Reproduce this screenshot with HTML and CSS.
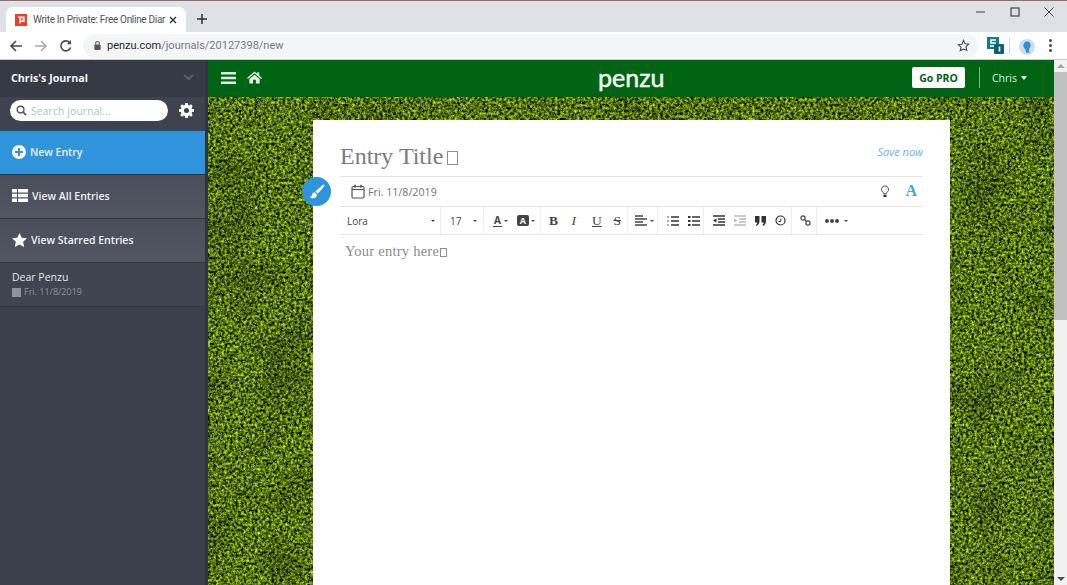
FILE: index.html
```html
<!DOCTYPE html>
<html lang="en">
<head>
<meta charset="utf-8">
<title>Write In Private: Free Online Diary</title>
<link rel="stylesheet" href="styles.css">
</head>
<body>
<div class="browser">
  <div class="tabstrip">
    <div class="tab">
      <span class="favicon"><svg viewBox="0 0 12 12" width="12" height="12"><rect width="12" height="12" fill="#e8412a"/><path d="M3 3.2h6v4H5.4M5.2 3.2v6.4M6.8 5.2h1" fill="none" stroke="#fff" stroke-width="1.4"/></svg></span>
      <span class="tab-title">Write In Private: Free Online Diar</span>
      <svg class="tab-close" viewBox="0 0 10 10" width="10" height="10"><path d="M2 2l6 6M8 2l-6 6" stroke="#303134" stroke-width="1.4"/></svg>
    </div>
    <svg class="new-tab" viewBox="0 0 12 12" width="12" height="12"><path d="M6 1v10M1 6h10" stroke="#303134" stroke-width="1.5"/></svg>
    <div class="win-controls">
      <svg viewBox="0 0 12 12" width="12" height="12"><path d="M1 6h9" stroke="#444" stroke-width="1"/></svg>
      <svg viewBox="0 0 12 12" width="12" height="12"><rect x="2" y="2" width="8" height="8" fill="none" stroke="#444" stroke-width="1.2"/></svg>
      <svg viewBox="0 0 12 12" width="12" height="12"><path d="M1.5 1.5l9 9M10.5 1.5l-9 9" stroke="#444" stroke-width="1"/></svg>
    </div>
  </div>
  <div class="toolbar">
    <svg class="nav-icon" viewBox="0 0 14 14" width="14" height="14"><path d="M13 7H2M7 2L2 7l5 5" fill="none" stroke="#45474a" stroke-width="1.6"/></svg>
    <svg class="nav-icon" viewBox="0 0 14 14" width="14" height="14"><path d="M1 7h11M7 2l5 5-5 5" fill="none" stroke="#a9abae" stroke-width="1.6"/></svg>
    <svg class="nav-icon" viewBox="0 0 14 14" width="14" height="14"><path d="M11.6 8.5A5 5 0 1 1 10.6 3.5" fill="none" stroke="#45474a" stroke-width="1.6"/><path d="M12 1v4.2H7.8z" fill="#45474a"/></svg>
    <div class="omnibox">
      <svg viewBox="0 0 10 12" width="9" height="11"><path d="M3 5V3.500a2 2 0 0 1 4 0V5" fill="none" stroke="#55575a" stroke-width="1.2"/><rect x="1.500" y="5" width="7" height="6" rx="1" fill="#55575a"/></svg>
      <span class="url"><span class="url-host">penzu.com</span>/journals/20127398/new</span>
      <svg class="star" viewBox="0 0 14 14" width="13" height="13"><path d="M7 1.500l1.700 3.600 3.900.5-2.900 2.700.8 3.900L7 10.800l-3.500 1.900.8-3.900-2.900-2.700 3.900-.5z" fill="none" stroke="#45474a" stroke-width="1.200"/></svg>
    </div>
    <div class="ext">
      <svg viewBox="0 0 17 17" width="17" height="17"><rect x="0" y="0" width="12" height="12" fill="#137c80"/><path d="M9 3H4v3h4v3H3" fill="none" stroke="#fff" stroke-width="1.5"/><rect x="7" y="7" width="10" height="10" rx="1" fill="#0d5f78"/><path d="M12.500 9.500v5" stroke="#fff" stroke-width="1.600"/></svg>
    </div>
    <span class="tb-sep"></span>
    <span class="avatar"><svg viewBox="0 0 16 16" width="16" height="16"><circle cx="8" cy="8" r="8" fill="#d5dbe2"/><path d="M8 2.500c2.600 0 4 1.900 3.600 4.300-.3 1.700-1.300 2.500-1.500 3.700-.1 1.100.1 2.300.4 3.300H6.800c.2-1.300.1-2.600-.7-3.600C5 8.800 4.200 7.800 4.400 6c.3-2.100 1.600-3.500 3.600-3.500z" fill="#2f8fe6"/></svg></span>
    <span class="kebab"><i></i><i></i><i></i></span>
  </div>
</div>

<div class="app">
  <aside class="sidebar">
    <div class="side-head">
      <span class="journal-name">Chris's Journal</span>
      <svg viewBox="0 0 12 8" width="11" height="7"><path d="M1 1l5 5 5-5" fill="none" stroke="#5d626d" stroke-width="2.200"/></svg>
    </div>
    <div class="side-search">
      <div class="search-box">
        <svg viewBox="0 0 12 12" width="11" height="11"><circle cx="5" cy="5" r="3.700" fill="none" stroke="#555" stroke-width="1.500"/><path d="M7.800 7.800L11 11" stroke="#555" stroke-width="1.800"/></svg>
        <span class="search-text">Search journal...</span>
      </div>
      <svg class="gear" viewBox="0 0 16 16" width="15" height="15"><path fill="#fff" fill-rule="evenodd" d="M6.700 0h2.600l.4 2.100 1.200.5L12.700 1.400l1.900 1.900-1.200 1.800.5 1.200 2.100.4v2.600l-2.100.4-.5 1.200 1.200 1.800-1.900 1.900-1.800-1.200-1.200.5-.4 2.100H6.700l-.4-2.100-1.200-.5-1.800 1.200-1.900-1.900 1.200-1.800-.5-1.200L0 9.300V6.700l2.100-.4.5-1.200L1.400 3.300l1.900-1.900 1.800 1.200 1.200-.5zM8 5.300a2.700 2.700 0 1 0 0 5.400 2.700 2.700 0 0 0 0-5.400z"/></svg>
    </div>
    <a class="side-item side-new">
      <svg viewBox="0 0 14 14" width="14" height="14"><path fill="#fff" fill-rule="evenodd" d="M7 0a7 7 0 1 1 0 14A7 7 0 0 1 7 0zM6 3v3H3v2h3v3h2V8h3V6H8V3z"/></svg>
      <span>New Entry</span>
    </a>
    <a class="side-item">
      <svg viewBox="0 0 16 13" width="16" height="13"><path fill="#fff" d="M0 0h5v3.500H0zM6 0h10v3.500H6zM0 4.700h5v3.600H0zM6 4.700h10v3.600H6zM0 9.500h5V13H0zM6 9.500h10V13H6z"/></svg>
      <span>View All Entries</span>
    </a>
    <a class="side-item">
      <svg viewBox="0 0 16 15" width="15" height="14"><path fill="#fff" d="M8 0l2.400 5 5.600.7-4.100 3.800L13 15 8 12.300 3 15l1.100-5.500L0 5.700 5.600 5z"/></svg>
      <span>View Starred Entries</span>
    </a>
    <div class="entry-row">
      <div class="entry-title">Dear Penzu</div>
      <div class="entry-date"><i class="entry-swatch"></i>Fri. 11/8/2019</div>
    </div>
  </aside>
  <main class="main">
    <svg class="grass" aria-hidden="true">
      <defs>
        <filter id="grass-fx" x="0" y="0" width="100%" height="100%" color-interpolation-filters="sRGB">
          <feTurbulence type="fractalNoise" baseFrequency="0.36" numOctaves="3" seed="11" result="fine"/>
          <feColorMatrix in="fine" type="matrix" values="0 0 0 1.300 -.32  0 0 0 1.550 -.33  0 0 0 .3 -.1  0 0 0 0 1" result="tint"/>
          <feGaussianBlur in="tint" stdDeviation=".5" result="soft"/>
          <feTurbulence type="fractalNoise" baseFrequency="0.02" numOctaves="3" seed="5" result="broad"/>
          <feColorMatrix in="broad" type="matrix" values="0 0 0 .7 .62  0 0 0 .7 .62  0 0 0 .7 .62  0 0 0 0 1" result="patches"/>
          <feComposite in="soft" in2="patches" operator="arithmetic" k1="1" k2="0" k3="0" k4="0" result="shaded"/>
          <feTurbulence type="fractalNoise" baseFrequency="0.6" numOctaves="2" seed="4" result="speck"/>
          <feColorMatrix in="speck" type="matrix" values="0 0 0 0 .56  0 0 0 0 .72  0 0 0 0 .22  0 0 0 7 -4.500" result="flecks"/>
          <feGaussianBlur in="flecks" stdDeviation=".4" result="softflecks"/>
          <feMerge><feMergeNode in="shaded"/><feMergeNode in="softflecks"/></feMerge>
        </filter>
      </defs>
      <rect width="100%" height="100%" filter="url(#grass-fx)"/>
    </svg>
    <header class="topbar">
      <div class="topbar-left">
        <svg viewBox="0 0 15 12" width="15" height="12"><path fill="#dff0dc" d="M0 0h15v2.400H0zM0 4.800h15v2.400H0zM0 9.600h15V12H0z"/></svg>
        <svg viewBox="0 0 16 13" width="15" height="13"><path fill="#dff0dc" d="M8 0l3 2.600V1h2v3.300L16 7l-1 1-7-6-7 6-1-1zM8 3.500l5.500 4.700V13H9.500V9h-3v4H2.500V8.200z"/></svg>
      </div>
      <div class="logo">penzu</div>
      <div class="topbar-right">
        <span class="go-pro">Go PRO</span>
        <span class="top-sep"></span>
        <span class="user">Chris<i class="caret-white"></i></span>
      </div>
    </header>
    <div class="canvas">
      <article class="paper">
        <span class="brush"><svg viewBox="0 0 16 16" width="16" height="16"><path fill="#fff" d="M15 .800c.5.400.5 1 .1 1.500C13.500 4.400 10 8.600 8.700 9.700L6.400 7.500C7.600 6.100 11.800 2.500 13.700.900c.4-.4.900-.5 1.300-.1zM5.700 8.300l2.100 2.100c.1 2-1.300 3.900-3.500 3.900-1.300 0-2.700-.5-3.500-1.500 1.300 0 1.900-.7 2.100-1.900.2-1.400 1.300-2.600 2.800-2.600z"/></svg></span>
        <div class="title-row">
          <h1 class="entry-heading">Entry Title<i class="tofu"></i></h1>
          <a class="save">Save now</a>
        </div>
        <div class="date-row">
          <svg viewBox="0 0 14 15" width="14" height="15"><rect x="1" y="2.500" width="12" height="11.500" rx="1.200" fill="none" stroke="#555" stroke-width="1.200"/><path d="M1 5.500h12" stroke="#555" stroke-width="1.200"/><path d="M4 .800v3M10 .800v3" stroke="#555" stroke-width="1.500"/></svg>
          <span class="date-text">Fri. 11/8/2019</span>
          <svg class="bulb" viewBox="0 0 10 14" width="10" height="13"><path d="M5 1a3.800 3.800 0 0 1 2.200 6.900c-.5.400-.7.900-.7 1.500h-3c0-.6-.2-1.100-.7-1.500A3.800 3.800 0 0 1 5 1z" fill="none" stroke="#444" stroke-width="1"/><path d="M3.300 10.500h3.400v2.500H3.300z" fill="#333"/></svg>
          <span class="font-a">A</span>
        </div>
        <div class="format-bar">
          <div class="fgroup fg-font"><span>Lora</span><i class="caret"></i></div>
          <div class="fgroup fg-size"><span>17</span><i class="caret"></i></div>
          <div class="fgroup fg-color">
            <span class="fb-item"><span class="a-under">A</span><i class="caret"></i></span>
            <span class="fb-item"><span class="a-box">A</span><i class="caret"></i></span>
          </div>
          <div class="fgroup fg-style">
            <b class="st">B</b><i class="st st-i">I</i><u class="st">U</u><s class="st">S</s>
          </div>
          <div class="fgroup fg-align">
            <svg viewBox="0 0 12 11" width="12" height="11"><path d="M0 1h8M0 4h12M0 7h8M0 10h12" stroke="#444" stroke-width="1.300"/></svg><i class="caret"></i>
          </div>
          <div class="fgroup fg-list">
            <svg viewBox="0 0 12 12" width="12" height="12"><path d="M4 2h8M4 6h8M4 10h8" stroke="#333" stroke-width="1.500"/><path d="M1 1v2M1 5v2M1 9v2" stroke="#777" stroke-width="1.200"/></svg>
            <svg viewBox="0 0 12 12" width="12" height="12"><path d="M4 2h8M4 6h8M4 10h8" stroke="#333" stroke-width="1.500"/><path d="M0 2h2.500M0 6h2.500M0 10h2.500" stroke="#333" stroke-width="2"/></svg>
          </div>
          <div class="fgroup fg-indent">
            <svg viewBox="0 0 12 11" width="12" height="11"><path d="M0 1h12M5 4h7M5 7h7M0 10h12" stroke="#333" stroke-width="1.400"/><path d="M3.500 3.500v4L0 5.500z" fill="#333"/></svg>
            <svg viewBox="0 0 12 11" width="12" height="11"><path d="M0 1h12M5 4h7M5 7h7M0 10h12" stroke="#bbb" stroke-width="1.400"/><path d="M0 3.500v4l3.500-2z" fill="#bbb"/></svg>
            <svg viewBox="0 0 11 10" width="11" height="10"><path fill="#333" d="M0 0h4.500v5c0 2.300-1 4-3 5L.8 8.800c1-.5 1.400-1.200 1.500-2.300H0zM6.500 0H11v5c0 2.300-1 4-3 5l-.7-1.200c1-.5 1.400-1.200 1.500-2.300H6.500z"/></svg>
            <svg viewBox="0 0 11 11" width="11" height="11"><circle cx="5.500" cy="5.500" r="4.500" fill="none" stroke="#333" stroke-width="1.200"/><path d="M3.500 6.500h2.300V3.500" fill="none" stroke="#333" stroke-width="1"/></svg>
          </div>
          <div class="fgroup fg-link">
            <svg viewBox="0 0 12 12" width="11" height="11"><circle cx="3.300" cy="3.300" r="2.300" fill="none" stroke="#444" stroke-width="1.300"/><circle cx="8.700" cy="8.700" r="2.300" fill="none" stroke="#444" stroke-width="1.300"/><path d="M4.800 4.800l2.400 2.400" stroke="#444" stroke-width="1.300"/></svg>
          </div>
          <div class="fgroup fg-more"><i class="dot"></i><i class="dot"></i><i class="dot"></i><i class="caret caret-more"></i></div>
        </div>
        <div class="entry-body">Your entry here<i class="tofu tofu-small"></i></div>
      </article>
    </div>
  </main>
  <div class="scrollbar">
    <i class="sb-up"></i>
    <div class="sb-track"><div class="sb-thumb"></div></div>
    <i class="sb-down"></i>
  </div>
</div>
</body>
</html>
```
FILE: styles.css
```css
* { box-sizing: border-box; }
html, body { margin: 0; height: 100%; overflow: hidden; }
body { display: flex; flex-direction: column; font-family: "Open Sans", "Liberation Sans", sans-serif; background: #fff; }
i { font-style: normal; }

.browser { flex: none; height: 60px; display: flex; flex-direction: column; border-top: 1px solid #8f6f6a; }
.tabstrip { height: 31px; background: #dee1e6; display: flex; align-items: flex-end; padding-left: 6px; position: relative; }
.tab { width: 180px; height: 25px; background: #fff; border-radius: 7px 7px 0 0; display: flex; align-items: center; padding-left: 9px; }
.favicon { width: 12px; height: 12px; display: flex; flex: none; }
.tab-title { font: 10px "Roboto", sans-serif; letter-spacing: -.3px; color: #505356; margin-left: 6px; width: 135px; flex: none; white-space: nowrap; }
.tab-close { flex: none; }
.new-tab { margin: 0 0 7px 10px; }
.win-controls { margin-left: auto; align-self: flex-start; display: flex; gap: 22px; padding: 5px 12px 0 0; }
.toolbar { height: 28px; background: #fff; display: flex; align-items: center; padding-left: 9px; border-bottom: 1px solid #c9cbce; }
.nav-icon { margin-right: 11px; }
.omnibox { flex: none; width: 895px; height: 24px; margin-left: -1px; padding: 0 8px 0 10px; background: #f4f5f6; border-radius: 12px; display: flex; align-items: center; }
.url { margin-left: 5px; font: 11px "Roboto", sans-serif; color: #75787c; }
.url-host { color: #26282b; }
.star { margin-left: auto; }
.ext { margin-left: 9px; width: 17px; height: 17px; }
.tb-sep { width: 1px; height: 16px; background: #d6d8db; margin-left: 5px; }
.avatar { width: 16px; height: 16px; margin-left: 9px; }
.kebab { display: flex; flex-direction: column; gap: 2px; margin-left: 14px; }
.kebab i { width: 3px; height: 3px; background: #45474a; border-radius: 50%; }

.app { flex: 1; min-height: 0; display: flex; }
.sidebar { flex: none; width: 208px; background: #3a3f4b; border-right: 3px solid #30343c; display: flex; flex-direction: column; }
.side-head { height: 37px; padding: 0 11px 2px; background: #363a44; display: flex; align-items: center; justify-content: space-between; }
.journal-name { font-size: 10.700px; font-weight: 700; color: #f2f3f5; }
.side-search { height: 34px; background: #3e434f; padding: 0 11px 7px 10px; display: flex; align-items: center; justify-content: space-between; }
.search-box { width: 158px; height: 21px; background: #fff; border-radius: 11px; display: flex; align-items: center; padding-left: 6px; gap: 4px; }
.search-text { font-size: 10.200px; color: #b9bbbe; letter-spacing: .2px; }
.side-item { height: 44px; display: flex; align-items: center; gap: 4px; padding: 0 0 2px 12px; background: linear-gradient(#4a4e5a, #515662); border-bottom: 1px solid #32363f; font-size: 10.500px; font-weight: 600; color: #eef0f2; }
.side-new { background: #2f94dc; }
.entry-row { height: 44px; padding: 7px 12px; background: #3f4450; border-bottom: 1px solid #343842; }
.entry-title { font-size: 10.500px; line-height: 15px; color: #e4e6e9; }
.entry-date { font-size: 9px; line-height: 14px; color: #8f939b; display: flex; align-items: center; gap: 3px; }
.entry-swatch { width: 9px; height: 9px; background: #8f939b; }

.main { flex: 1; min-width: 0; position: relative; display: flex; flex-direction: column; overflow: hidden; }
.grass { position: absolute; inset: 0; width: 100%; height: 100%; }
.topbar { flex: none; position: relative; height: 37px; background: #006414; display: flex; align-items: center; padding: 0 27px 2px 13px; }
.topbar-left { display: flex; align-items: center; gap: 11px; width: 377px; }
.logo { font: 25px/37px "Lato", sans-serif; color: #f2f8f0; -webkit-text-stroke: .5px #f2f8f0; }
.topbar-right { display: flex; align-items: center; margin-left: auto; }
.go-pro { width: 53px; height: 21px; background: #fff; border-radius: 2px; color: #006414; font-size: 10.500px; font-weight: 700; display: flex; align-items: center; justify-content: center; }
.top-sep { width: 1px; height: 21px; background: #7fb088; margin: 0 12px 0 14px; }
.user { font-size: 10.500px; color: #dff0dc; display: flex; align-items: center; gap: 4px; }
.caret-white { width: 0; height: 0; border: 3.500px solid transparent; border-top: 4px solid #fff; border-bottom: 0; }

.canvas { flex: 1; min-height: 0; position: relative; padding: 23px 104px 0 105px; }
.paper { position: relative; height: 500px; background: #fff; padding: 0 27px; }
.brush { position: absolute; left: -11px; top: 57px; width: 29px; height: 29px; border-radius: 50%; background: #2f94dc; display: flex; align-items: center; justify-content: center; }
.title-row { height: 57px; display: flex; align-items: center; justify-content: space-between; border-bottom: 1px solid #e3e3e3; padding-top: 17px; }
.entry-heading { margin: 0; font: 400 24px "Liberation Serif", serif; color: #7b7b7b; display: flex; align-items: center; }
.tofu { width: 11px; height: 14px; border: 1px solid #8e8e8e; margin-left: 4px; margin-top: 2px; }
.save { font: italic 11px "Open Sans", sans-serif; color: #6fb1e2; margin: -11px 0 0; }
.date-row { height: 30px; display: flex; align-items: center; padding-left: 11px; border-bottom: 1px solid #e6e6e6; padding-right: 6px; }
.date-text { font-size: 10.700px; color: #6f7276; margin-left: 3px; }
.bulb { margin-left: auto; }
.font-a { font: 700 16px "Liberation Serif", serif; color: #44a4d8; margin: -2px 0 0 15px; }
.format-bar { height: 28px; display: flex; align-items: center; border-bottom: 1px solid #e6e6e6; }
.fgroup { height: 100%; display: flex; align-items: center; border-right: 1px solid #eee; color: #444; font-size: 10px; flex: none; }
.caret { display: inline-block; width: 0; height: 0; border: 2px solid transparent; border-top: 2.500px solid #444; border-bottom: 0; }
.fg-font { width: 101px; padding: 0 5px 0 7px; justify-content: space-between; }
.fg-size { width: 43px; padding: 0 6px 0 9px; justify-content: space-between; }
.fg-color { width: 57px; padding-left: 9px; gap: 9px; }
.fb-item { display: flex; align-items: center; gap: 2px; }
.a-under { font-size: 10px; font-weight: 700; border-bottom: 1px solid #444; line-height: 11px; padding: 0 1px; }
.a-box { font-size: 9px; font-weight: 700; color: #fff; background: #444; border-radius: 2px; width: 12px; height: 11px; line-height: 11px; text-align: center; }
.fg-style { width: 87px; padding-left: 8px; font-family: "Liberation Serif", serif; color: #444; }
.st { flex: none; width: 21.500px; font-size: 13.500px; }
.st:last-child { width: auto; }
.st-i { font-style: italic; padding-left: 1px; }
.fg-align { width: 30px; padding-left: 7px; gap: 3px; }
.fg-list { width: 46px; padding-left: 9px; gap: 9px; }
.fg-indent { width: 88px; padding-left: 9px; gap: 9px; }
.fg-link { width: 25px; padding-left: 8px; }
.fg-more { padding-left: 8px; gap: 1px; border-right: 0; }
.caret-more { margin-left: 4px; }
.dot { width: 4px; height: 4px; background: #444; border-radius: 50%; }
.entry-body { padding: 8px 5px; font: 14.500px "Liberation Serif", serif; color: #8a8a8a; letter-spacing: .25px; display: flex; align-items: center; }
.tofu-small { width: 7px; height: 9px; margin-left: 1px; }

.scrollbar { flex: none; width: 13px; background: #f1f1f1; display: flex; flex-direction: column; align-items: center; }
.sb-up, .sb-down { flex: none; width: 0; height: 0; border: 4px solid transparent; margin: 4px 0; }
.sb-up { border-top: 0; border-bottom-color: #a3a3a3; }
.sb-down { border-bottom: 0; border-top-color: #505050; }
.sb-track { flex: 1; width: 100%; }
.sb-thumb { width: 100%; height: 248px; background: #c1c1c1; }
```
